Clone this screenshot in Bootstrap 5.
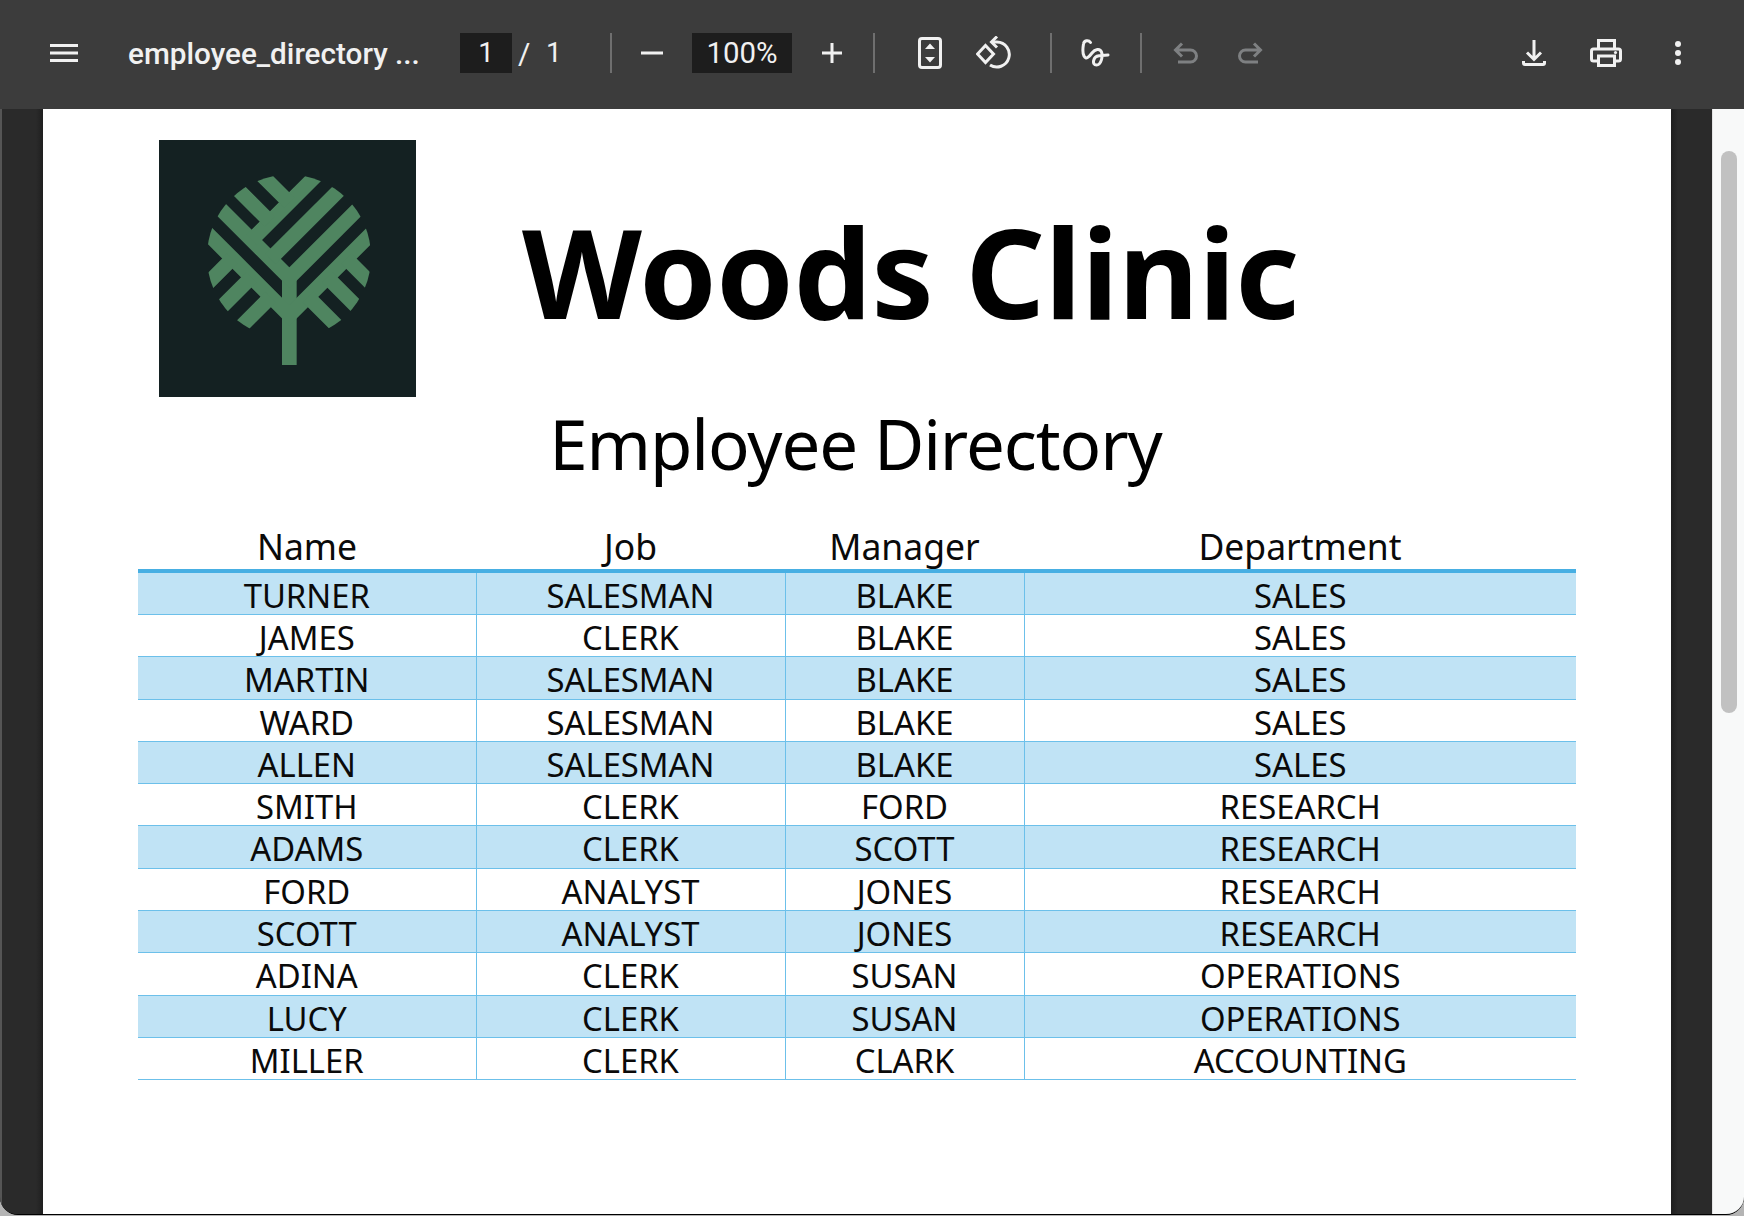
<!DOCTYPE html>
<html lang="en">
<head>
    <meta charset="UTF-8">
    <meta name="viewport" content="width=device-width, initial-scale=1.0">
    <title>employee_directory</title>
    <link href="https://cdn.jsdelivr.net/npm/bootstrap@5.3.0/dist/css/bootstrap.min.css" rel="stylesheet">
    <style>
        html, body { height: 100%; overflow: hidden; background: #b4b4b4; }
        body { font-family: "Noto Sans", sans-serif; color: #000; }
        .app-window { width: 1744px; height: 1215px; border-bottom: 1px solid #000; border-radius: 0 0 18px 18px; overflow: hidden; background: #2a2a2a; }
        .pdf-toolbar { height: 109px; padding-bottom: 3px; background: #3c3c3c; color: #f1f1f1; font-family: Roboto, sans-serif; }
        .pdf-toolbar svg { flex: none; display: block; }
        .tb-name { margin-left: 50px; width: 332px; padding-top: 2px; font-size: 29.7px; font-weight: 500; white-space: nowrap; }
        .tb-field { height: 40px; background: #1d1d1d; font-size: 28px; }
        .tb-page { width: 52px; }
        .tb-zoom { width: 100px; margin-left: 29px; font-size: 29.4px; }
        .tb-slash { width: 12px; margin-left: 6px; font-size: 30px; }
        .tb-total { margin-left: 16px; width: 15px; font-size: 28px; }
        .tb-sep { flex: none; width: 2px; height: 40px; background: #6f6f6f; }
        .m-menu { margin-left: 50px; }
        .m-sep1 { margin-left: 49px; }
        .m-minus { margin-left: 29px; }
        .m-plus { margin-left: 30px; }
        .m-sep2 { margin-left: 31px; }
        .m-fit { margin-left: 43px; }
        .m-rotate { margin-left: 34px; }
        .m-sep3 { margin-left: 38px; }
        .m-draw { margin-left: 29px; }
        .m-sep4 { margin-left: 30px; }
        .m-undo { margin-left: 31px; }
        .m-redo { margin-left: 38px; }
        .m-download { margin-left: 259px; }
        .m-print { margin-left: 44px; }
        .m-dots { margin-left: 53px; }
        .pdf-view { height: 1106px; }
        .pdf-gutter { flex: none; width: 43px; background: linear-gradient(90deg, #555 0, #555 2px, #2a2a2a 2px, #2a2a2a 36px, #1f1f1f 100%); }
        .pdf-gutter-r { flex: none; width: 41px; background: linear-gradient(270deg, #2a2a2a 0, #2a2a2a 34px, #1f1f1f 100%); }
        .pdf-page { flex: none; width: 1628px; padding: 31px 95px 0; background: #fff; }
        .scroll-rail { flex: none; width: 32px; padding: 42px 7px 0 8px; background: #f8f9f9; border-left: 1px solid #e4e4e4; }
        .scroll-thumb { height: 562px; border-radius: 9px; background: #c1c1c1; }
        .doc-logo { display: block; flex: none; width: 257px; height: 257px; margin-left: 21px; }
        .doc-title { margin: 2px 0 0 106px; font-size: 124px; font-weight: 700; line-height: 257px; letter-spacing: -.3px; }
        .doc-sub { margin: 0; padding: 2px 3px 0 0; font-size: 69px; font-weight: 400; line-height: 85px; letter-spacing: -1.1px; text-align: center; }
        .emp-table { margin-top: 41px; margin-bottom: 0; table-layout: fixed; width: 1438px; font-size: 32.8px; --bs-table-bg: transparent; --bs-table-color: #0a0a0a; }
        .emp-table th, .emp-table td { padding: 0; text-align: center; font-weight: 400; }
        .emp-table th { height: 44px; padding-bottom: 6px; border: 0; border-bottom: 4px solid #47afe3; font-size: 35.5px; line-height: 34px; }
        .emp-table td { height: 42.3px; padding-top: 4px; border: 0; border-bottom: 1px solid #6cc0ea; line-height: 37px; }
        .emp-table td + td { border-left: 1px solid #6cc0ea; }
        .emp-table tbody tr:nth-child(odd) td { background: #c0e3f5; }
        .col-name { width: 338px; }
        .col-job { width: 309px; }
        .col-mgr { width: 239px; }
    </style>
</head>
<body>
    <div class="app-window">
        <div class="pdf-toolbar d-flex align-items-center">
            <svg class="m-menu" width="28" height="18" viewBox="0 0 28 18" fill="#f1f1f1"><rect width="28" height="3"/><rect y="7.5" width="28" height="3"/><rect y="15" width="28" height="3"/></svg>
            <div class="tb-name">employee_directory ...</div>
            <div class="tb-field tb-page d-flex align-items-center justify-content-center">1</div>
            <div class="tb-slash">/</div>
            <div class="tb-total">1</div>
            <div class="tb-sep m-sep1"></div>
            <svg class="m-minus" width="22" height="22" viewBox="0 0 22 22" fill="#f1f1f1"><rect y="9.5" width="22" height="3"/></svg>
            <div class="tb-field tb-zoom d-flex align-items-center justify-content-center">100%</div>
            <svg class="m-plus" width="20" height="20" viewBox="0 0 20 20" fill="#f1f1f1"><rect y="8.5" width="20" height="3"/><rect x="8.5" width="3" height="20"/></svg>
            <div class="tb-sep m-sep2"></div>
            <!-- fit to page -->
            <svg class="m-fit" width="24" height="32" viewBox="0 0 24 32"><rect x="1.5" y="1.5" width="21" height="29" rx="2.5" fill="none" stroke="#f1f1f1" stroke-width="3"/><path d="M7 12L12 6.5L17 12ZM7 20L12 25.5L17 20Z" fill="#f1f1f1"/></svg>
            <!-- rotate -->
            <svg class="m-rotate" width="36" height="34" viewBox="0 0 36 34" fill="none" stroke="#f1f1f1" stroke-width="3"><path d="M9.5 9.5L17.5 18L9.5 26.5L1.5 18Z"/><path d="M16 6H21A12.5 12.5 0 1 1 14 29"/><path d="M21 .5L15.5 6L21 11.5"/></svg>
            <div class="tb-sep m-sep3"></div>
            <!-- draw -->
            <svg class="m-draw" width="29" height="28" viewBox="0 0 29 28" fill="none" stroke="#f1f1f1" stroke-width="3" stroke-linecap="round" stroke-linejoin="round"><path d="M9.5 3.5C7.5 .5 3 1.5 2.5 5C2 8 1 13 3 17C5 21 8 18 11 14C14 10 19 9 20.5 13C22 18 20 26 15.5 26C10.5 26 12 17.5 18 16.8L27 16"/></svg>
            <div class="tb-sep m-sep4"></div>
            <svg class="m-undo" width="26" height="24" viewBox="0 0 26 24" fill="none" stroke="#7e8082" stroke-width="3"><path d="M9 2.5L2.5 9L9 15.5M2.5 9H17.5A6 6 0 0 1 17.5 21H5"/></svg>
            <svg class="m-redo" width="26" height="24" viewBox="0 0 26 24" fill="none" stroke="#7e8082" stroke-width="3"><path d="M17 2.5L23.5 9L17 15.5M23.5 9H8.5A6 6 0 0 0 8.5 21H21"/></svg>
            <svg class="m-download" width="24" height="28" viewBox="0 0 24 28" fill="none" stroke="#f1f1f1" stroke-width="3"><path d="M12 1V21M5 13.5L12 20.5L19 13.5"/><path d="M1.5 22V24A1.5 1.5 0 0 0 3 25.5H21A1.5 1.5 0 0 0 22.5 24V22"/></svg>
            <svg class="m-print" width="32" height="28" viewBox="0 0 32 28" fill="none" stroke="#f1f1f1" stroke-width="3"><path d="M8.5 10V1.5H24.5V10"/><rect x="1.5" y="10" width="29" height="12" rx="2"/><rect x="8.5" y="17" width="16" height="9.5" fill="#3c3c3c"/><circle cx="25.5" cy="13.5" r="1.6" fill="#f1f1f1" stroke="none"/></svg>
            <svg class="m-dots" width="6" height="24" viewBox="0 0 6 24" fill="#f1f1f1"><circle cx="3" cy="3" r="3"/><circle cx="3" cy="12" r="3"/><circle cx="3" cy="21" r="3"/></svg>
        </div>
        <div class="pdf-view d-flex">
            <div class="pdf-gutter"></div>
            <div class="pdf-page">
                <div class="d-flex">
                    <svg class="doc-logo" viewBox="27 30 771 771">
                        <defs><clipPath id="crown"><circle cx="417" cy="380" r="246"/></clipPath></defs>
                        <rect x="27" y="30" width="771" height="771" fill="#142122"/>
                        <g fill="none" stroke="#4f8560" stroke-width="44">
                            <path d="M418 450V705"/>
                            <g clip-path="url(#crown)">
                                <path d="M150 175L418 443L690 171"/>
                                <path d="M130 268L418 556L700 275"/>
                                <path d="M361 387L600 148M305 330L520 115"/>
                                <path d="M360 275L230 145M418 218L320 120"/>
                                <path d="M589 386L690 487M532 442L660 570M474 501L590 617"/>
                                <path d="M247 386L146 487M304 442L176 570M362 501L246 617"/>
                            </g>
                        </g>
                    </svg>
                    <h1 class="doc-title">Woods Clinic</h1>
                </div>
                <h2 class="doc-sub">Employee Directory</h2>
                <table class="table emp-table">
                    <colgroup><col class="col-name"><col class="col-job"><col class="col-mgr"><col></colgroup>
                    <thead><tr><th>Name</th><th>Job</th><th>Manager</th><th>Department</th></tr></thead>
                    <tbody>
                        <tr><td>TURNER</td><td>SALESMAN</td><td>BLAKE</td><td>SALES</td></tr>
                        <tr><td>JAMES</td><td>CLERK</td><td>BLAKE</td><td>SALES</td></tr>
                        <tr><td>MARTIN</td><td>SALESMAN</td><td>BLAKE</td><td>SALES</td></tr>
                        <tr><td>WARD</td><td>SALESMAN</td><td>BLAKE</td><td>SALES</td></tr>
                        <tr><td>ALLEN</td><td>SALESMAN</td><td>BLAKE</td><td>SALES</td></tr>
                        <tr><td>SMITH</td><td>CLERK</td><td>FORD</td><td>RESEARCH</td></tr>
                        <tr><td>ADAMS</td><td>CLERK</td><td>SCOTT</td><td>RESEARCH</td></tr>
                        <tr><td>FORD</td><td>ANALYST</td><td>JONES</td><td>RESEARCH</td></tr>
                        <tr><td>SCOTT</td><td>ANALYST</td><td>JONES</td><td>RESEARCH</td></tr>
                        <tr><td>ADINA</td><td>CLERK</td><td>SUSAN</td><td>OPERATIONS</td></tr>
                        <tr><td>LUCY</td><td>CLERK</td><td>SUSAN</td><td>OPERATIONS</td></tr>
                        <tr><td>MILLER</td><td>CLERK</td><td>CLARK</td><td>ACCOUNTING</td></tr>
                    </tbody>
                </table>
            </div>
            <div class="pdf-gutter-r"></div>
            <div class="scroll-rail"><div class="scroll-thumb"></div></div>
        </div>
    </div>
    <script src="https://cdn.jsdelivr.net/npm/bootstrap@5.3.0/dist/js/bootstrap.bundle.min.js"></script>
</body>
</html>
